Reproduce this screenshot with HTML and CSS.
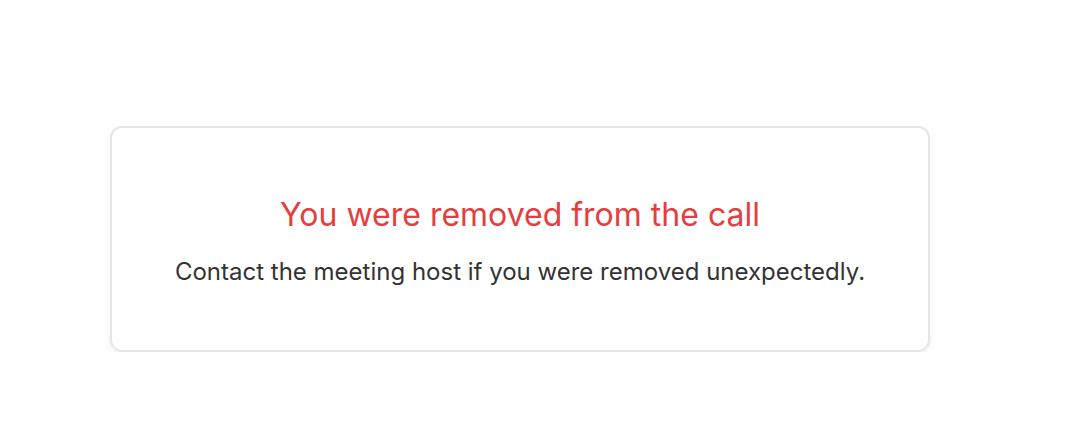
FILE: index.html
```html
<!DOCTYPE html>
<html lang="en">

<head>
    <meta charset="UTF-8">
    <meta name="viewport" content="width=device-width, initial-scale=1.0">
    <title>Removed from call</title>
    <link rel="stylesheet" href="styles.css">
</head>

<body>
    <div class="page">
        <div class="card">
            <h1 class="title">You were removed from the call</h1>
            <p class="message">Contact the meeting host if you were removed unexpectedly.</p>
        </div>
    </div>
</body>

</html>
```

FILE: styles.css
```css
body {
    font-family: Inter, "Noto Sans", sans-serif;
    margin: 0;
    background-color: #fff;
}

.page {
    padding: 126px 0 0 110px;
}

.card {
    width: 820px;
    height: 226px;
    box-sizing: border-box;
    padding-top: 4px;
    border: 2px solid #e6e6e6;
    border-radius: 12px;
    box-shadow: 0 2px 6px rgba(0, 0, 0, 0.06);
    display: flex;
    flex-direction: column;
    align-items: center;
    justify-content: center;
}

.title {
    margin: 0 0 22px;
    font-size: 32px;
    font-weight: 400;
    color: #e53e3e;
    line-height: 40px;
}

.message {
    margin: 0;
    font-size: 24px;
    color: #333;
    line-height: 30px;
}
```
